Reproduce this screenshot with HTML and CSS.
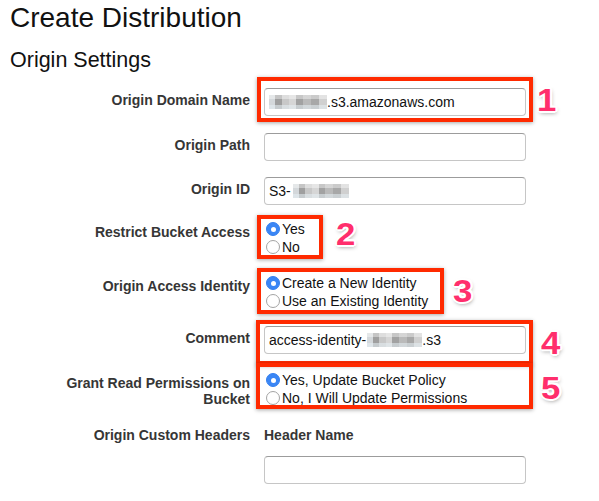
FILE: index.html
```html
<!DOCTYPE html>
<html>
<head>
<meta charset="utf-8">
<title>Create Distribution</title>
<link rel="stylesheet" href="styles.css">
</head>
<body>
<h1 class="title">Create Distribution</h1>
<h2 class="section">Origin Settings</h2>
<div class="form">
  <div class="row row-domain">
    <div class="label">Origin Domain Name</div>
    <div class="field">
      <div class="input"><span class="blur blur-domain"></span>.s3.amazonaws.com</div>
      <div class="mark mark-1"><span class="num">1</span></div>
    </div>
  </div>
  <div class="row row-path">
    <div class="label">Origin Path</div>
    <div class="field">
      <div class="input"></div>
    </div>
  </div>
  <div class="row row-id">
    <div class="label">Origin ID</div>
    <div class="field">
      <div class="input">S3-<span class="blur blur-id"></span></div>
    </div>
  </div>
  <div class="row row-restrict">
    <div class="label">Restrict Bucket Access</div>
    <div class="field">
      <div class="radios">
        <div class="opt"><span class="dot on"></span>Yes</div>
        <div class="opt"><span class="dot"></span>No</div>
      </div>
      <div class="mark mark-2"><span class="num">2</span></div>
    </div>
  </div>
  <div class="row row-oai">
    <div class="label">Origin Access Identity</div>
    <div class="field">
      <div class="radios">
        <div class="opt"><span class="dot on"></span>Create a New Identity</div>
        <div class="opt"><span class="dot"></span>Use an Existing Identity</div>
      </div>
      <div class="mark mark-3"><span class="num">3</span></div>
    </div>
  </div>
  <div class="row row-comment">
    <div class="label">Comment</div>
    <div class="field">
      <div class="input">access-identity-<span class="blur blur-comment"></span>.s3</div>
      <div class="mark mark-4"><span class="num">4</span></div>
    </div>
  </div>
  <div class="row row-grant">
    <div class="label">Grant Read Permissions on Bucket</div>
    <div class="field">
      <div class="radios">
        <div class="opt"><span class="dot on"></span>Yes, Update Bucket Policy</div>
        <div class="opt"><span class="dot"></span>No, I Will Update Permissions</div>
      </div>
      <div class="mark mark-5"><span class="num">5</span></div>
    </div>
  </div>
  <div class="row row-headers">
    <div class="label">Origin Custom Headers</div>
    <div class="field">
      <div class="col-head">Header Name</div>
      <div class="input"></div>
    </div>
  </div>
</div>
</body>
</html>
```

FILE: styles.css
```css
* { box-sizing: border-box; }

body {
  margin: 0;
  width: 599px;
  height: 501px;
  overflow: hidden;
  background: #fff;
  font-family: "Liberation Sans", Arial, Helvetica, sans-serif;
  color: #111;
}

.title {
  margin: 2px 0 0 10px;
  font-size: 28px;
  line-height: 32px;
  font-weight: normal;
  color: #111;
}

.section {
  margin: 13px 0 0 10px;
  font-size: 21.5px;
  line-height: 26px;
  font-weight: normal;
  color: #111;
}

.form { margin-top: 15px; }

.row {
  display: flex;
  align-items: flex-start;
}

.row-path { margin-top: 17px; }
.row-id { margin-top: 16px; }
.row-restrict { margin-top: 15px; }
.row-oai { margin-top: 18px; }
.row-comment { margin-top: 16px; }
.row-grant { margin-top: 17px; }
.row-headers { margin-top: 16px; }

.label {
  width: 190px;
  margin-left: 60px;
  padding-top: 4px;
  text-align: right;
  font-size: 14px;
  line-height: 16px;
  font-weight: bold;
  color: #363636;
}

.field {
  position: relative;
  width: 262px;
  margin-left: 14px;
}

.input {
  height: 28px;
  border: 1px solid #c6c6c6;
  border-top-color: #9c9c9c;
  border-radius: 4px;
  padding-left: 4px;
  font-size: 14px;
  line-height: 26px;
  color: #111;
  white-space: nowrap;
  background: #fff;
}

.blur {
  display: inline-block;
  height: 14px;
  vertical-align: -2px;
  filter: blur(0.6px);
  background:
    linear-gradient(180deg, rgba(255,255,255,0.4) 0 28%, rgba(255,255,255,0) 28% 72%, rgba(230,240,245,0.55) 72%),
    linear-gradient(90deg, #d4d8db 0 10%, #9f9f9f 10% 22%, #c8c8c8 22% 34%, #d6d6d6 34% 46%, #a2a2a2 46% 58%, #bababa 58% 72%, #a8a8a8 72% 86%, #d0d0d0 86%);
}

.blur-domain { width: 58px; }
.blur-id { width: 56px; margin-left: 2px; }
.blur-comment { width: 55px; margin-left: 1px; }

.radios {
  font-size: 14px;
  line-height: 18px;
  color: #111;
}

.opt {
  display: flex;
  align-items: center;
  height: 18px;
  white-space: nowrap;
}

.dot {
  flex: none;
  width: 14px;
  height: 14px;
  margin: 0 2px;
  border: 1px solid #a4a4a4;
  border-radius: 50%;
  background: #fff;
  display: flex;
  align-items: center;
  justify-content: center;
}

.dot.on {
  background: #3a86f5;
  border-color: #3580ee;
}

.dot.on::after {
  content: "";
  width: 5px;
  height: 5px;
  border-radius: 50%;
  background: #fff;
}

.col-head {
  padding-top: 4px;
  margin-bottom: 13px;
  font-size: 14px;
  line-height: 16px;
  font-weight: bold;
  color: #363636;
}

.mark {
  position: absolute;
  border: 4px solid #ff2a00;
  box-shadow: 0 1px 4px rgba(0, 0, 0, 0.35);
}

.mark-1 { left: -7px; top: -11px; width: 276px; height: 45px; }
.mark-2 { left: -7px; top: -5px; width: 66px; height: 44px; }
.mark-3 { left: -7px; top: -6px; width: 187px; height: 46px; }
.mark-4 { left: -8px; top: -6px; width: 277px; height: 45px; }
.mark-5 { left: -8px; top: -8px; width: 277px; height: 46px; }

.num {
  position: absolute;
  top: 50%;
  transform: translateY(-50%) scaleX(1.12);
  transform-origin: left center;
  font-size: 31px;
  line-height: 31px;
  font-weight: bold;
  color: #ff2e6c;
  text-shadow:
    2px 0 0 #fff, -2px 0 0 #fff, 0 2px 0 #fff, 0 -2px 0 #fff,
    1.5px 1.5px 0 #fff, -1.5px 1.5px 0 #fff, 1.5px -1.5px 0 #fff, -1.5px -1.5px 0 #fff,
    1px 2px 4px rgba(0, 0, 0, 0.45);
}

.mark-1 .num { left: calc(100% + 8px); }
.mark-2 .num { left: calc(100% + 17px); margin-top: -3px; }
.mark-3 .num { left: calc(100% + 13px); }
.mark-4 .num { left: calc(100% + 12px); }
.mark-5 .num { left: calc(100% + 12px); margin-top: 2px; }
```
